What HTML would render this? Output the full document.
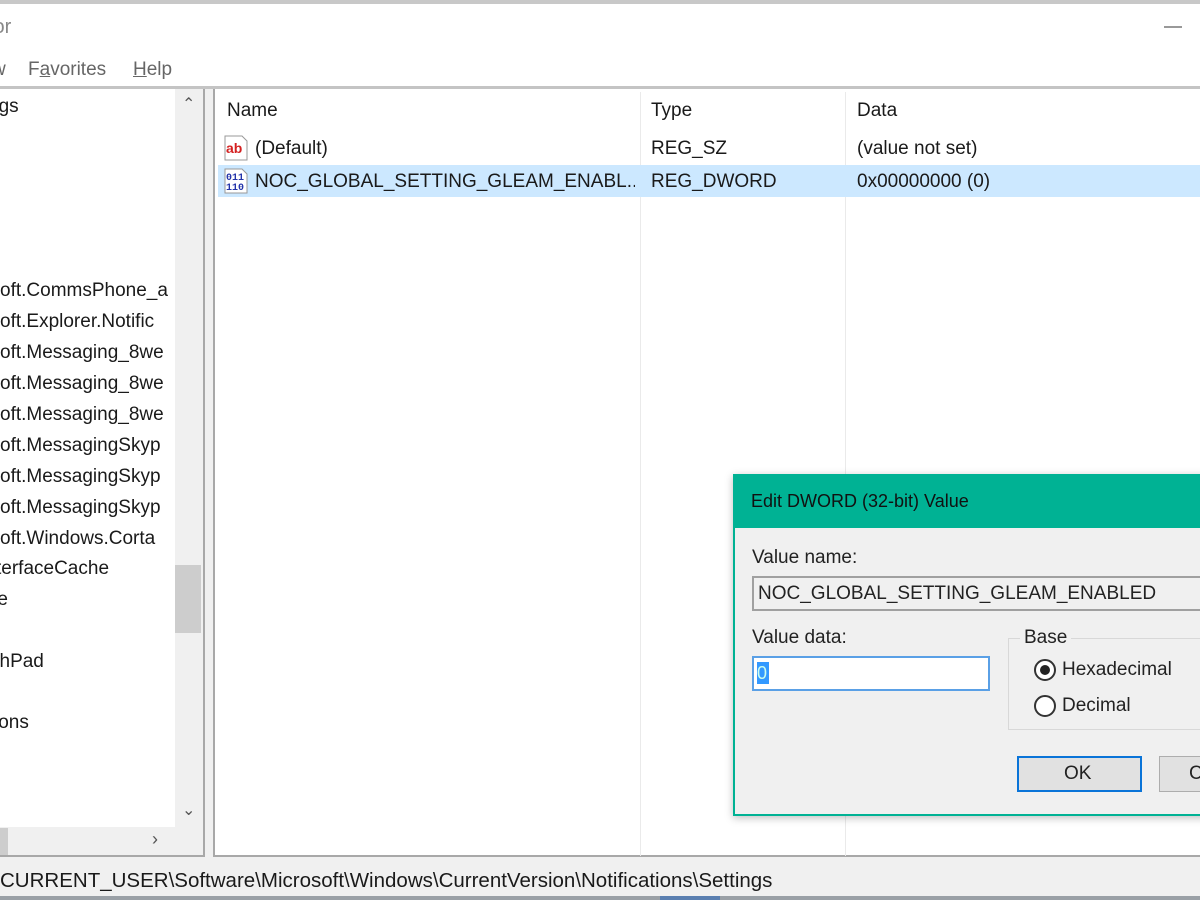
<!DOCTYPE html>
<html><head><meta charset="utf-8"><style>
*{margin:0;padding:0;box-sizing:border-box}
body{width:1200px;height:900px;overflow:hidden;background:#fff;font-family:"Liberation Sans",sans-serif;font-size:19px;color:#1a1a1a;position:relative}
.a{position:absolute;white-space:nowrap}
.t{position:absolute;left:0;width:175px;overflow:hidden;white-space:nowrap}
</style></head><body>
<div class="a" style="left:0;top:0;width:1200px;height:4px;background:#c8c8c8"></div>
<div class="a" style="left:-12px;top:16px;color:#888;font-size:20px">tor</div>
<div class="a" style="left:1164px;top:26px;width:18px;height:2px;background:#999"></div>
<div class="a" style="left:-8px;top:59px;color:#666;font-size:19px">w</div>
<div class="a" style="left:28px;top:59px;color:#666;font-size:19px">F<u>a</u>vorites</div>
<div class="a" style="left:133px;top:59px;color:#666;font-size:19px"><u>H</u>elp</div>
<div class="a" style="left:0;top:86px;width:1200px;height:3px;background:#c4c4c4"></div>
<div class="a" style="left:0;top:89px;width:1200px;height:770px;background:#f0f0f0"></div>
<!-- left pane -->
<div class="a" style="left:0;top:89px;width:205px;height:768px;background:#fff;border-right:2px solid #a8a8a8;border-bottom:2px solid #a8a8a8"></div>
<div class="a" style="left:175px;top:89px;width:28px;height:738px;background:#f0f0f0"></div>
<div class="a" style="left:175px;top:565px;width:26px;height:68px;background:#cdcdcd"></div>
<div class="a" style="left:182px;top:94px;color:#555;font-size:16px">&#8963;</div>
<div class="a" style="left:182px;top:800px;color:#555;font-size:16px">&#8964;</div>
<div class="a" style="left:0;top:827px;width:203px;height:28px;background:#f0f0f0"></div>
<div class="a" style="left:0;top:828px;width:8px;height:27px;background:#cdcdcd"></div>
<div class="a" style="left:152px;top:829px;color:#555;font-size:18px">&#8250;</div>
<div class="a" style="left:-12px;top:96px">ngs</div>
<div class="t" style="top:280px">oft.CommsPhone_a</div>
<div class="t" style="top:311px">oft.Explorer.Notific</div>
<div class="t" style="top:342px">oft.Messaging_8we</div>
<div class="t" style="top:373px">oft.Messaging_8we</div>
<div class="t" style="top:404px">oft.Messaging_8we</div>
<div class="t" style="top:435px">oft.MessagingSkyp</div>
<div class="t" style="top:466px">oft.MessagingSkyp</div>
<div class="t" style="top:497px">oft.MessagingSkyp</div>
<div class="t" style="top:528px">oft.Windows.Corta</div>
<div class="a" style="left:-4px;top:558px">terfaceCache</div>
<div class="a" style="left:-9px;top:589px">re</div>
<div class="a" style="left:-10px;top:651px">chPad</div>
<div class="a" style="left:-6px;top:712px">ions</div>
<!-- right pane -->
<div class="a" style="left:213px;top:89px;width:987px;height:768px;background:#fff;border-left:2px solid #a8a8a8;border-bottom:2px solid #a8a8a8"></div>
<div class="a" style="left:640px;top:92px;width:1px;height:764px;background:#eaeaea"></div>
<div class="a" style="left:845px;top:92px;width:1px;height:764px;background:#eaeaea"></div>
<div class="a" style="left:227px;top:100px">Name</div>
<div class="a" style="left:651px;top:100px">Type</div>
<div class="a" style="left:857px;top:100px">Data</div>
<div class="a" style="left:218px;top:165px;width:982px;height:32px;background:#cce8ff"></div>
<svg class="a" style="left:222px;top:134px" width="28" height="28"><path d="M3 2h17l5 5v19H3z" fill="#fff" stroke="#999"/><text x="4" y="19" font-family="Liberation Sans" font-weight="bold" font-size="14" fill="#d42020">ab</text></svg>
<svg class="a" style="left:222px;top:167px" width="28" height="28"><path d="M3 2h17l5 5v19H3z" fill="#fff" stroke="#999"/><text x="4" y="13" font-family="Liberation Mono" font-weight="bold" font-size="10" fill="#2233aa">011</text><text x="4" y="23" font-family="Liberation Mono" font-weight="bold" font-size="10" fill="#2233aa">110</text></svg>
<div class="a" style="left:255px;top:138px">(Default)</div>
<div class="a" style="left:651px;top:138px">REG_SZ</div>
<div class="a" style="left:857px;top:138px">(value not set)</div>
<div class="a" style="left:255px;top:171px;width:380px;overflow:hidden">NOC_GLOBAL_SETTING_GLEAM_ENABL...</div>
<div class="a" style="left:651px;top:171px">REG_DWORD</div>
<div class="a" style="left:857px;top:171px">0x00000000 (0)</div>
<!-- status -->
<div class="a" style="left:0;top:859px;width:1200px;height:37px;background:#f0f0f0"></div>
<div class="a" style="left:0;top:869px;font-size:20.5px">CURRENT_USER\Software\Microsoft\Windows\CurrentVersion\Notifications\Settings</div>
<div class="a" style="left:0;top:896px;width:1200px;height:4px;background:#9aa0a6"></div>
<div class="a" style="left:660px;top:896px;width:60px;height:4px;background:#5a7fb0"></div>
<!-- dialog -->
<div class="a" style="left:733px;top:474px;width:480px;height:342px;background:#f0f0f0;border:2px solid #00b294;box-shadow:0 2px 8px rgba(0,0,0,.25)"></div>
<div class="a" style="left:735px;top:476px;width:470px;height:52px;background:#00b294"></div>
<div class="a" style="left:751px;top:491px;color:#111;font-size:18px">Edit DWORD (32-bit) Value</div>
<div class="a" style="left:752px;top:547px;color:#222">Value name:</div>
<div class="a" style="left:752px;top:576px;width:460px;height:35px;background:#f0f0f0;border:2px solid #a0a0a0"></div>
<div class="a" style="left:758px;top:583px;color:#222">NOC_GLOBAL_SETTING_GLEAM_ENABLED</div>
<div class="a" style="left:752px;top:627px;color:#222">Value data:</div>
<div class="a" style="left:752px;top:656px;width:238px;height:35px;background:#fff;border:2px solid #5aa0e6"></div>
<div class="a" style="left:757px;top:662px;width:12px;height:22px;background:#3399ff;color:#cfe;font-size:18px;line-height:22px">0</div>
<div class="a" style="left:1008px;top:638px;width:200px;height:92px;border:1px solid #d8d8d8"></div>
<div class="a" style="left:1020px;top:627px;background:#f0f0f0;padding:0 4px;color:#222">Base</div>
<div class="a" style="left:1034px;top:659px;width:22px;height:22px;border-radius:50%;border:2px solid #333;background:#fff"></div>
<div class="a" style="left:1040px;top:665px;width:10px;height:10px;border-radius:50%;background:#222"></div>
<div class="a" style="left:1062px;top:659px;color:#222">Hexadecimal</div>
<div class="a" style="left:1034px;top:695px;width:22px;height:22px;border-radius:50%;border:2px solid #333;background:#fff"></div>
<div class="a" style="left:1062px;top:695px;color:#222">Decimal</div>
<div class="a" style="left:1017px;top:756px;width:125px;height:36px;background:#e1e1e1;border:2px solid #0a74d8"></div>
<div class="a" style="left:1064px;top:763px;color:#222">OK</div>
<div class="a" style="left:1159px;top:756px;width:80px;height:36px;background:#e1e1e1;border:1px solid #adadad"></div>
<div class="a" style="left:1189px;top:763px;color:#222">Cancel</div>
</body></html>
